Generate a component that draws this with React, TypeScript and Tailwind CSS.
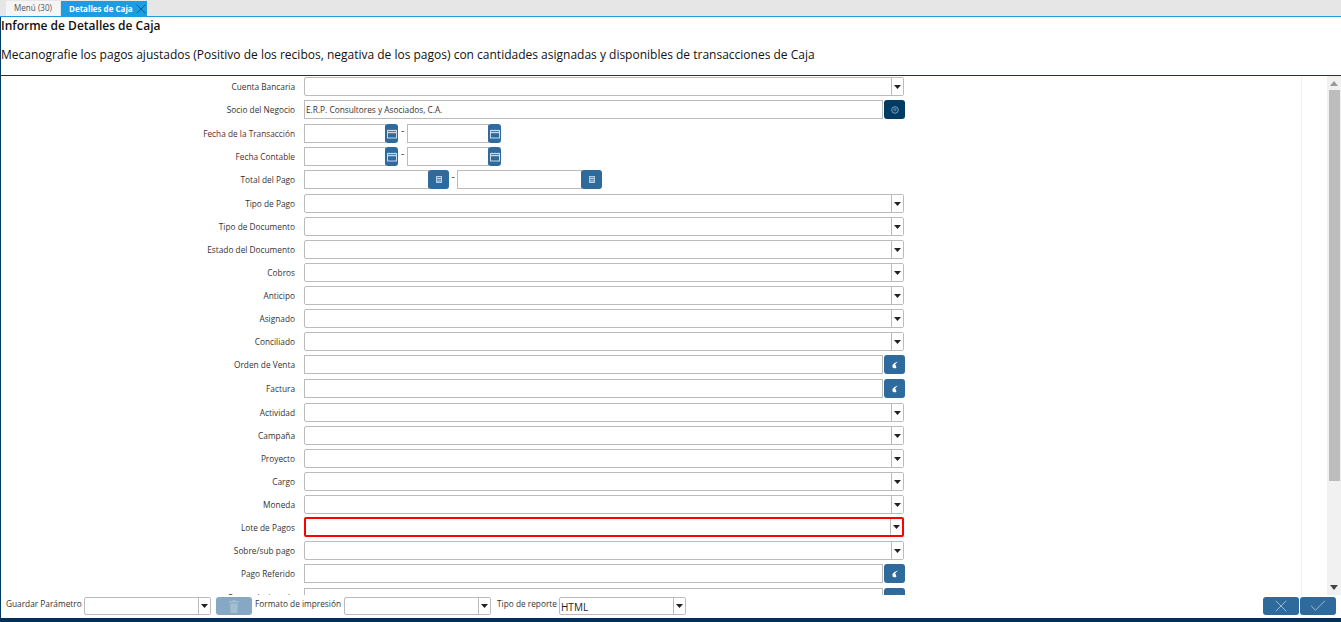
import React from 'react';
import { X, Check } from 'lucide-react';

const Caret = () => (
  <svg width="7" height="4" viewBox="0 0 7 4"><path d="M0 0h7L3.5 4z" fill="#222" /></svg>
);

const Combo = ({ value, className = 'w-[600px] h-[19px] border border-[#bbbbbb]' }: { value?: string; className?: string }) => (
  <div className={`flex items-stretch rounded-[2px] bg-white ${className}`}>
    <div className="flex-1 truncate px-[1px] pt-[2px] text-[10px] leading-[14px] text-[#222]">{value}</div>
    <div className="flex w-[12px] items-center justify-center border-l border-[#bbbbbb] bg-white">
      <Caret />
    </div>
  </div>
);

const TextBox = ({ value, className }: { value?: string; className: string }) => (
  <div className={`h-[19px] whitespace-nowrap border border-[#bbbbbb] bg-white px-[1px] text-[8.3px] leading-[17px] text-[#333] ${className}`}>{value}</div>
);

const IconButton = ({ className, children }: { className: string; children: React.ReactNode }) => (
  <div className={`flex h-[19px] items-center justify-center rounded-[3px] ${className}`}>{children}</div>
);

const CalendarIcon = () => (
  <svg width="10" height="10" viewBox="0 0 10 10" fill="none" stroke="#c9d9e8">
    <rect x="0.5" y="1.5" width="9" height="7.5" />
    <path d="M0.5 3.5h9" strokeWidth="1.4" />
    <path d="M2 0.5v1M5 0.5v1M8 0.5v1" strokeWidth="0.7" />
  </svg>
);

const CalcIcon = () => (
  <svg width="6" height="7" viewBox="0 0 6 7"><path d="M0 0h6v7H0z" fill="#b9cde0" /><path d="M1 1.5h4M1 3.5h4M1 5h4" stroke="#2f6a9c" strokeWidth="0.7" /></svg>
);

const ZoomBackIcon = () => (
  <svg width="8" height="8" viewBox="0 0 8 8"><path d="M7 0.5 3.5 2 1.5 4 1.5 6.5 4 7.5 5.5 6.5 4.5 4 4 3.5z" fill="#fff" /></svg>
);

const BPartnerIcon = () => (
  <svg width="8" height="8" viewBox="0 0 8 8" fill="none" stroke="#7fa3bf"><circle cx="4" cy="4" r="3.3" /><path d="M3.2 2.2v3M4.8 2.2v3" strokeWidth="0.8" /></svg>
);

const TrashIcon = () => (
  <svg width="10" height="13" viewBox="0 0 10 13" fill="#a3bdd2">
    <path d="M3.5 0h3v1H10v1.5H0V1h3.5z" />
    <path d="M1 3.5h8L8.4 13H1.6z" />
  </svg>
);

const DateRange = () => (
  <div className="flex items-start">
    <TextBox className="w-[82px]" />
    <IconButton className="-ml-[1px] w-[13px] bg-[#2f6a9c]"><CalendarIcon /></IconButton>
    <span className="w-[9px] text-center text-[10px] leading-[12px] text-[#333]">-</span>
    <TextBox className="w-[82px]" />
    <IconButton className="-ml-[1px] w-[13px] bg-[#2f6a9c]"><CalendarIcon /></IconButton>
  </div>
);

const AmountRange = () => (
  <div className="flex items-start">
    <TextBox className="w-[125px]" />
    <IconButton className="-ml-[1px] w-[21px] bg-[#2f6a9c]"><CalcIcon /></IconButton>
    <span className="w-[8px] text-center text-[10px] leading-[12px] text-[#333]">-</span>
    <TextBox className="w-[125px]" />
    <IconButton className="-ml-[1px] w-[21px] bg-[#2f6a9c]"><CalcIcon /></IconButton>
  </div>
);

const Lookup = ({ value, dark }: { value?: string; dark?: boolean }) => (
  <div className="flex w-[601px] items-start">
    <TextBox className="w-[579px]" value={value} />
    <div className="w-[1px]" />
    <IconButton className={`w-[21px] ${dark ? 'bg-[#003b64]' : 'bg-[#2f6a9c]'}`}>
      {dark ? <BPartnerIcon /> : <ZoomBackIcon />}
    </IconButton>
  </div>
);

// rows holding a full size button come out 1px taller
const rows: { label: string; field: React.ReactNode; tall?: boolean; red?: boolean }[] = [
  { label: 'Cuenta Bancaria', field: <Combo /> },
  { label: 'Socio del Negocio', field: <Lookup dark value="E.R.P. Consultores y Asociados, C.A." />, tall: true },
  { label: 'Fecha de la Transacción', field: <DateRange />, red: true },
  { label: 'Fecha Contable', field: <DateRange />, red: true },
  { label: 'Total del Pago', field: <AmountRange />, tall: true },
  { label: 'Tipo de Pago', field: <Combo /> },
  { label: 'Tipo de Documento', field: <Combo /> },
  { label: 'Estado del Documento', field: <Combo /> },
  { label: 'Cobros', field: <Combo /> },
  { label: 'Anticipo', field: <Combo /> },
  { label: 'Asignado', field: <Combo /> },
  { label: 'Conciliado', field: <Combo /> },
  { label: 'Orden de Venta', field: <Lookup />, tall: true },
  { label: 'Factura', field: <Lookup />, tall: true },
  { label: 'Actividad', field: <Combo /> },
  { label: 'Campaña', field: <Combo /> },
  { label: 'Proyecto', field: <Combo /> },
  { label: 'Cargo', field: <Combo /> },
  { label: 'Moneda', field: <Combo /> },
  { label: 'Lote de Pagos', field: <Combo className="-mt-[1px] h-[20px] w-[600px] border-2 border-[#ff0000]" /> },
  { label: 'Sobre/sub pago', field: <Combo /> },
  { label: 'Pago Referido', field: <Lookup />, tall: true },
  { label: 'Pago relacionado', field: <Lookup />, tall: true },
];

export default function App() {
  return (
    <div className="flex h-[622px] w-[1341px] flex-col overflow-hidden bg-white font-['Open_Sans','Noto_Sans',sans-serif]">
      {/* tab strip */}
      <div className="flex h-[17px] shrink-0 items-end border-b border-[#1f9be0] bg-[#e6e6e6] pl-[6px]">
        <div className="flex h-[15px] w-[54px] items-center justify-center whitespace-nowrap bg-[#f5f5f5] text-[8.1px] text-[#555]">Menú (30)</div>
        <div className="ml-[1px] flex h-[15px] w-[86px] items-center whitespace-nowrap bg-[#1f9be0] pl-[8px] text-[8px] font-bold text-white">
          Detalles de Caja
          <X size={16} strokeWidth={1} className="ml-auto -mr-[1px] shrink-0 text-[#003b64]" />
        </div>
      </div>

      <div className="flex min-h-0 flex-1 flex-col border-l border-[#003b64]">
        {/* header */}
        <div className="h-[59px] shrink-0 border-b border-[#003b64] text-[#111]">
          <div className="text-[12px] font-semibold leading-[17px]">Informe de Detalles de Caja</div>
          <div className="mt-[12px] text-[12px] leading-[17px]">
            Mecanografie los pagos ajustados (Positivo de los recibos, negativa de los pagos) con cantidades asignadas y disponibles de transacciones de Caja
          </div>
        </div>

        {/* form */}
        <div className="flex min-h-0 flex-1">
          <div className="min-w-0 flex-1 overflow-hidden pt-[1px]">
            {rows.map((r) => (
              <div key={r.label} className={`flex items-start ${r.tall ? 'h-[24px]' : 'h-[23px]'}`}>
                <div className={`w-[294px] whitespace-nowrap text-right text-[8.3px] leading-[19px] ${r.red ? 'text-[#5a2a2a]' : 'text-[#333]'}`}>{r.label}</div>
                <div className="ml-[9px]">{r.field}</div>
              </div>
            ))}
          </div>
          <div className="w-[26px] shrink-0 border-l border-[#f2f2f2]" />
          <div className="flex w-[14px] shrink-0 flex-col items-center bg-[#f1f1f1]">
            <svg width="8" height="5" viewBox="0 0 8 5" className="mt-[5px]"><path d="M0 5h8L4 0z" fill="#999" /></svg>
            <div className="ml-[1px] mt-[4px] h-[391px] w-[11px] bg-[#bdbdbd]" />
            <svg width="8" height="5" viewBox="0 0 8 5" className="mt-[104px]"><path d="M0 0h8L4 5z" fill="#444" /></svg>
          </div>
        </div>

        {/* footer */}
        <div className="flex h-[23px] shrink-0 items-start whitespace-nowrap bg-white pl-[5px] pt-[2px] text-[8.3px] leading-[14px] text-[#333]">
          <span className="w-[78px]">Guardar Parámetro</span>
          <Combo className="h-[18px] w-[127px] border border-[#bbbbbb]" />
          <div className="ml-[5px] flex h-[18px] w-[36px] items-center justify-center rounded-[3px] bg-[#87a8c4]">
            <TrashIcon />
          </div>
          <span className="ml-[3px] w-[89px]">Formato de impresión</span>
          <Combo className="h-[18px] w-[147px] border border-[#bbbbbb]" />
          <span className="ml-[6px] w-[62px]">Tipo de reporte</span>
          <Combo value="HTML" className="h-[18px] w-[127px] border border-[#bbbbbb]" />
          <div className="ml-auto mr-[5px] flex gap-[1px]">
            <div className="flex h-[18px] w-[36px] items-center justify-center rounded-[3px] bg-[#2f6a9c]">
              <X size={20} strokeWidth={0.8} className="text-[#d5e2ee]" />
            </div>
            <div className="flex h-[18px] w-[36px] items-center justify-center rounded-[3px] bg-[#2f6a9c]">
              <Check size={20} strokeWidth={0.8} className="text-[#d5e2ee]" />
            </div>
          </div>
        </div>
      </div>
      <div className="h-[4px] shrink-0 bg-[#003058]" />
    </div>
  );
}
